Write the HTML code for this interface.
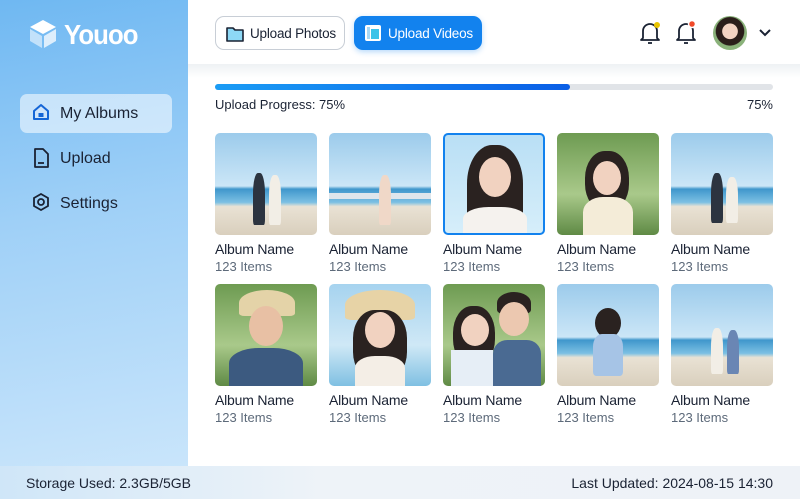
<!DOCTYPE html>
<html><head><meta charset="utf-8"><style>
*{margin:0;padding:0;box-sizing:border-box}
body{width:800px;height:499px;overflow:hidden;font-family:"Liberation Sans",sans-serif;background:#fff;position:relative;color:#1a2233}
.side{position:absolute;left:0;top:0;width:188px;height:466px;background:linear-gradient(170deg,#6fb8f2 0%,#9fd0f7 45%,#c9e5fb 100%)}
.logo{position:absolute;left:64px;top:19px;font-size:28px;font-weight:bold;color:#fff;letter-spacing:-1px;transform:scaleX(0.92);transform-origin:left}
.nav{position:absolute;left:20px;width:152px;height:39px;font-size:16px;display:flex;align-items:center;padding-left:40px;color:#1a2233}
.nav svg{position:absolute;left:12px;top:9px}
.act{background:rgba(255,255,255,0.55);border-radius:7px}
.btn{position:absolute;top:16px;height:34px;border-radius:9px;font-size:13.5px;display:flex;align-items:center;padding-left:34px;letter-spacing:-0.2px}
.btn svg{position:absolute;left:9px;top:7px}
.hdrline{position:absolute;left:188px;top:64px;width:612px;height:14px;background:linear-gradient(#eef1f4,#fff)}
.bar{position:absolute;left:215px;top:84px;width:558px;height:6px;border-radius:3px;background:#e1e4e8}
.bar div{width:355px;height:6px;border-radius:3px;background:linear-gradient(90deg,#1a9cf5,#0a5ee6)}
.card{position:absolute;width:102px}
.img{width:102px;height:102px;border-radius:5px;overflow:hidden;position:relative}
.t1{font-size:14px;margin-top:6px;color:#1a2233;letter-spacing:-0.2px}
.t2{font-size:13px;color:#5d6a7a;margin-top:2px}
.beach{background:linear-gradient(#9ccbeb 0%,#cbe6f7 52%,#3f97cc 55%,#7cc0e3 68%,#e9e2d4 72%,#d9cfbd 100%)}
.grass{background:linear-gradient(#6e9b52,#a9c98a 60%,#5f8a45)}
.fig{position:absolute;border-radius:40% 40% 10% 10%}
.foot{position:absolute;left:0;top:466px;width:800px;height:33px;background:linear-gradient(90deg,#cfe6f8,#eef3f8 40%,#eef2f7);font-size:14px;color:#1a2233}
</style></head><body>
<div class="side">
<svg style="position:absolute;left:28px;top:18px" width="30" height="32" viewBox="0 0 30 32"><path d="M15 2 L28 9 L15 16 L2 9Z" fill="#fff"/><path d="M2 11 L14 18 L14 30 L2 23Z" fill="rgba(255,255,255,.55)"/><path d="M28 11 L16 18 L16 30 L28 23Z" fill="rgba(255,255,255,.75)"/></svg>
<div class="logo">Youoo</div>
<div class="nav act" style="top:94px"><svg width="18" height="18" viewBox="0 0 18 18"><path d="M2 8 L9 2 L16 8 V16 H2Z" fill="#cfe5fb" stroke="#1566d6" stroke-width="2" stroke-linejoin="round"/><rect x="6.5" y="10" width="5" height="4" fill="#1566d6"/></svg>My Albums</div>
<div class="nav" style="top:139px"><svg width="18" height="20" viewBox="0 0 18 20"><path d="M3 1 H11 L16 6 V19 H3Z" fill="#8fc7f2" stroke="#1a2233" stroke-width="1.8" stroke-linejoin="round"/><path d="M6 15 H12" stroke="#1a2233" stroke-width="1.8"/></svg>Upload</div>
<div class="nav" style="top:184px"><svg width="18" height="18" viewBox="0 0 18 18"><path d="M9 1 L16 5 V13 L9 17 L2 13 V5Z" fill="none" stroke="#1a2233" stroke-width="1.8"/><circle cx="9" cy="9" r="3" fill="none" stroke="#1a2233" stroke-width="1.8"/></svg>Settings</div>
</div>
<div class="btn" style="left:215px;width:130px;border:1px solid #c8ced6;background:#fff;color:#1a2233"><svg width="20" height="20" viewBox="0 0 20 20"><path d="M2 4 H8 L10 6 H18 V17 H2Z" fill="#8dd8f5" stroke="#1a2233" stroke-width="1.6" stroke-linejoin="round"/></svg>Upload Photos</div>
<div class="btn" style="left:354px;width:128px;background:#1282ee;color:#fff;box-shadow:0 2px 6px rgba(18,130,238,.3)"><svg width="20" height="20" viewBox="0 0 20 20"><rect x="2" y="2" width="16" height="16" rx="2" fill="#fff"/><rect x="8" y="6" width="8" height="10" fill="#3cc3e8"/><rect x="4" y="4" width="3" height="12" fill="#a8d8f5"/></svg>Upload Videos</div>
<svg style="position:absolute;left:638px;top:20px" width="24" height="26" viewBox="0 0 24 26"><path d="M5 18 V11 A7 7 0 0 1 19 11 V18 L21 20 H3Z" fill="none" stroke="#1a2233" stroke-width="1.8" stroke-linejoin="round"/><path d="M10 23 H14" stroke="#1a2233" stroke-width="1.8"/><circle cx="19" cy="5" r="3" fill="#e8c400"/></svg>
<svg style="position:absolute;left:674px;top:18px" width="24" height="28" viewBox="0 0 24 28"><path d="M5 20 V13 A7 7 0 0 1 19 13 V20 L21 22 H3Z" fill="none" stroke="#1a2233" stroke-width="1.8" stroke-linejoin="round"/><path d="M10 25 H14" stroke="#1a2233" stroke-width="1.8"/><circle cx="18" cy="6" r="3.5" fill="#f04a2a" stroke="#fff" stroke-width="1.5"/></svg>
<div style="position:absolute;left:713px;top:16px;width:34px;height:34px;border-radius:50%;background:radial-gradient(circle at 50% 45%,#f2d3c2 0 30%,#2a1e1a 32% 55%,#8ab27a 58%)"></div>
<svg style="position:absolute;left:758px;top:28px" width="14" height="10" viewBox="0 0 14 10"><path d="M2 2 L7 7 L12 2" fill="none" stroke="#1a2233" stroke-width="2"/></svg>
<div class="hdrline"></div>
<div class="bar"><div></div></div>
<div style="position:absolute;left:215px;top:97px;font-size:13px">Upload Progress: 75%</div>
<div style="position:absolute;right:27px;top:97px;font-size:13px">75%</div>

<div class="card" style="left:215px;top:133px"><div class="img beach"><div class="fig" style="left:38px;top:40px;width:12px;height:52px;background:#2c3440"></div><div class="fig" style="left:54px;top:42px;width:12px;height:50px;background:#f2eee6"></div></div><div class="t1">Album Name</div><div class="t2">123 Items</div></div>
<div class="card" style="left:329px;top:133px"><div class="img beach"><div style="position:absolute;left:0;top:60px;width:102px;height:6px;background:#dfe6ec"></div><div class="fig" style="left:50px;top:42px;width:12px;height:50px;background:#f0d8c8"></div></div><div class="t1">Album Name</div><div class="t2">123 Items</div></div>
<div class="card" style="left:443px;top:133px"><div class="img" style="border:2px solid #1282ee;background:linear-gradient(#b9dff5,#d6eefa)"><div style="position:absolute;left:22px;top:10px;width:56px;height:86px;border-radius:45% 45% 10% 10%;background:#2a2220"></div><div style="position:absolute;left:34px;top:22px;width:32px;height:40px;border-radius:50%;background:#f1d2c0"></div><div style="position:absolute;left:18px;top:72px;width:64px;height:30px;border-radius:40% 40% 0 0;background:#f5f2ee"></div></div><div class="t1">Album Name</div><div class="t2">123 Items</div></div>
<div class="card" style="left:557px;top:133px"><div class="img grass"><div style="position:absolute;left:28px;top:18px;width:44px;height:60px;border-radius:45%;background:#2a2220"></div><div style="position:absolute;left:36px;top:28px;width:28px;height:34px;border-radius:50%;background:#f1d2c0"></div><div style="position:absolute;left:26px;top:64px;width:50px;height:38px;border-radius:40% 40% 0 0;background:#f4ecd8"></div></div><div class="t1">Album Name</div><div class="t2">123 Items</div></div>
<div class="card" style="left:671px;top:133px"><div class="img beach"><div class="fig" style="left:40px;top:40px;width:12px;height:50px;background:#2c3440"></div><div class="fig" style="left:55px;top:44px;width:12px;height:46px;background:#f2eee6"></div></div><div class="t1">Album Name</div><div class="t2">123 Items</div></div>

<div class="card" style="left:215px;top:284px"><div class="img grass"><div style="position:absolute;left:24px;top:6px;width:56px;height:26px;border-radius:50% 50% 10% 10%;background:#e4d3a8"></div><div style="position:absolute;left:34px;top:22px;width:34px;height:40px;border-radius:50%;background:#e8c0a4"></div><div style="position:absolute;left:14px;top:64px;width:74px;height:38px;border-radius:40% 40% 0 0;background:#3c5a80"></div></div><div class="t1">Album Name</div><div class="t2">123 Items</div></div>
<div class="card" style="left:329px;top:284px"><div class="img" style="background:linear-gradient(#a6d3ef,#cfe8f6 60%,#7fc0e2)"><div style="position:absolute;left:16px;top:6px;width:70px;height:30px;border-radius:50% 50% 10% 10%;background:#e7d3a6"></div><div style="position:absolute;left:24px;top:26px;width:54px;height:70px;border-radius:40%;background:#2a2220"></div><div style="position:absolute;left:36px;top:28px;width:30px;height:36px;border-radius:50%;background:#f1d2c0"></div><div style="position:absolute;left:26px;top:72px;width:50px;height:30px;border-radius:40% 40% 0 0;background:#f4eee6"></div></div><div class="t1">Album Name</div><div class="t2">123 Items</div></div>
<div class="card" style="left:443px;top:284px"><div class="img grass"><div style="position:absolute;left:10px;top:22px;width:42px;height:60px;border-radius:45%;background:#2a2220"></div><div style="position:absolute;left:18px;top:30px;width:28px;height:32px;border-radius:50%;background:#f1d2c0"></div><div style="position:absolute;left:54px;top:8px;width:34px;height:22px;border-radius:50% 50% 20% 20%;background:#2a2220"></div><div style="position:absolute;left:56px;top:18px;width:30px;height:34px;border-radius:50%;background:#ecc8b0"></div><div style="position:absolute;left:8px;top:66px;width:42px;height:36px;background:#e6eef6"></div><div style="position:absolute;left:50px;top:56px;width:48px;height:46px;border-radius:30% 30% 0 0;background:#4a6a92"></div></div><div class="t1">Album Name</div><div class="t2">123 Items</div></div>
<div class="card" style="left:557px;top:284px"><div class="img beach"><div style="position:absolute;left:38px;top:24px;width:26px;height:30px;border-radius:50%;background:#2a2220"></div><div style="position:absolute;left:36px;top:50px;width:30px;height:42px;border-radius:30% 30% 10% 10%;background:#a6c4e6"></div></div><div class="t1">Album Name</div><div class="t2">123 Items</div></div>
<div class="card" style="left:671px;top:284px"><div class="img beach"><div class="fig" style="left:40px;top:44px;width:12px;height:46px;background:#f2eee6"></div><div class="fig" style="left:56px;top:46px;width:12px;height:44px;background:#6a86b4"></div></div><div class="t1">Album Name</div><div class="t2">123 Items</div></div>

<div class="foot"><span style="position:absolute;left:26px;top:9px">Storage Used: 2.3GB/5GB</span><span style="position:absolute;right:27px;top:9px">Last Updated: 2024-08-15 14:30</span></div>
</body></html>
